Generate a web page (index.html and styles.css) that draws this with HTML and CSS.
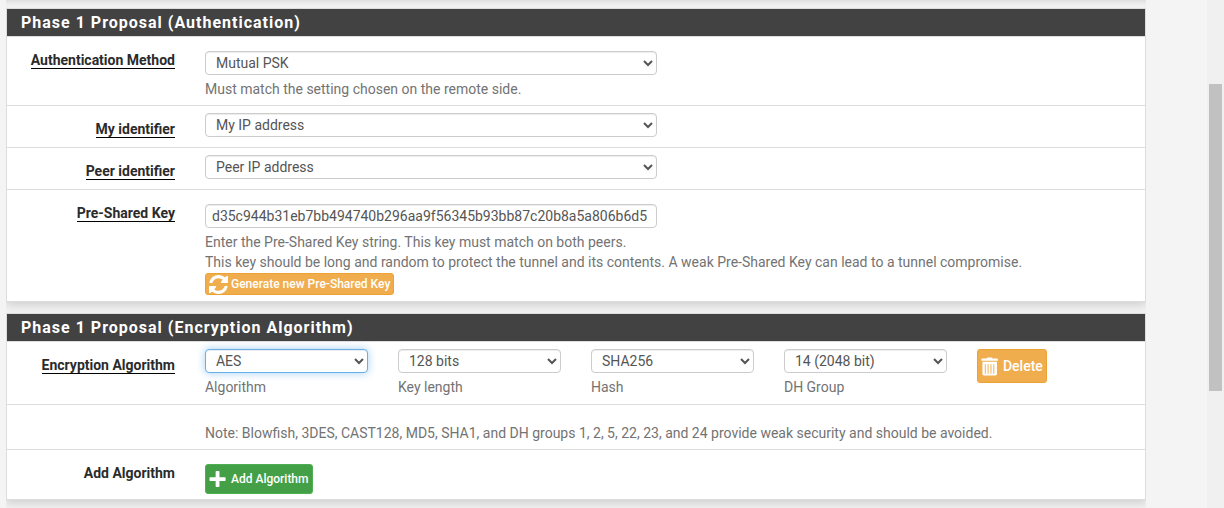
FILE: index.html
```html
<!DOCTYPE html>
<html lang="en">
<head>
<meta charset="utf-8">
<title>Phase 1 Proposal</title>
<link rel="stylesheet" href="styles.css">
</head>
<body>
<main class="content">
<form class="panels">
  <section class="panel">
    <h2 class="panel-heading">Phase 1 Proposal (Authentication)</h2>
    <div class="form-group">
      <label class="label" for="auth"><span class="required">Authentication Method</span></label>
      <div class="field">
        <select class="control" id="auth"><option>Mutual PSK</option></select>
        <p class="help">Must match the setting chosen on the remote side.</p>
      </div>
    </div>
    <div class="form-group compact">
      <label class="label" for="myid"><span class="required">My identifier</span></label>
      <div class="field"><select class="control" id="myid"><option>My IP address</option></select></div>
    </div>
    <div class="form-group compact">
      <label class="label" for="peerid"><span class="required">Peer identifier</span></label>
      <div class="field"><select class="control" id="peerid"><option>Peer IP address</option></select></div>
    </div>
    <div class="form-group">
      <label class="label" for="psk"><span class="required">Pre-Shared Key</span></label>
      <div class="field wide">
        <input class="control" id="psk" type="text" value="d35c944b31eb7bb494740b296aa9f56345b93bb87c20b8a5a806b6d5">
        <p class="help">Enter the Pre-Shared Key string. This key must match on both peers.<br>This key should be long and random to protect the tunnel and its contents. A weak Pre-Shared Key can lead to a tunnel compromise.</p>
        <button class="btn warning slim" type="button">
          <svg class="icon" viewBox="0 128 1536 1536" aria-hidden="true"><path d="M1511 1056q0 5-1 7-64 268-268 434.500t-478 166.500q-146 0-282.500-55t-243.500-157l-129 129q-19 19-45 19t-45-19-19-45v-448q0-26 19-45t45-19h448q26 0 45 19t19 45-19 45l-137 137q71 66 161 102t187 36q134 0 250-65t186-179q11-17 53-117 8-23 30-23h192q13 0 22.500 9.500t9.500 22.500zm25-800v448q0 26-19 45t-45 19h-448q-26 0-45-19t-19-45 19-45l138-138q-148-137-349-137-134 0-250 65t-186 179q-11 17-53 117-8 23-30 23h-199q-13 0-22.500-9.500t-9.500-22.500v-7q65-268 270-434.500t480-166.500q146 0 284 55.500t245 156.500l130-129q19-19 45-19t45 19 19 45z"/></svg>
          Generate new Pre-Shared Key
        </button>
      </div>
    </div>
  </section>

  <section class="panel">
    <h2 class="panel-heading">Phase 1 Proposal (Encryption Algorithm)</h2>
    <div class="form-group algorithms">
      <div class="label"><span class="required">Encryption Algorithm</span></div>
      <div class="field small">
        <select class="control focused" id="alg"><option>AES</option></select>
        <label class="help" for="alg">Algorithm</label>
      </div>
      <div class="field small">
        <select class="control" id="len"><option>128 bits</option></select>
        <label class="help" for="len">Key length</label>
      </div>
      <div class="field small">
        <select class="control" id="hash"><option>SHA256</option></select>
        <label class="help" for="hash">Hash</label>
      </div>
      <div class="field small">
        <select class="control" id="dh"><option>14 (2048 bit)</option></select>
        <label class="help" for="dh">DH Group</label>
      </div>
      <div class="field small">
        <button class="btn warning large" type="button">
          <svg class="icon" viewBox="0 0 20 20" aria-hidden="true"><path fill-rule="evenodd" d="M6 1.500Q6 .5 7 .5h4Q12 .5 12 1.500h5q.8 0 .8.800V4H.5V2.300q0-.8.800-.8zM1.500 5h15.300v13q0 1.500-1.500 1.500H3Q1.500 19.500 1.500 18zM4 7.500v10h1v-10zM7 7.500v10h1v-10zM10 7.500v10h1v-10zM13 7.500v10h1v-10z"/></svg>
          Delete
        </button>
      </div>
    </div>
    <div class="form-group note">
      <div class="label"></div>
      <div class="field wide"><p class="help">Note: Blowfish, 3DES, CAST128, MD5, SHA1, and DH groups 1, 2, 5, 22, 23, and 24 provide weak security and should be avoided.</p></div>
    </div>
    <div class="form-group add">
      <div class="label">Add Algorithm</div>
      <div class="field">
        <button class="btn success" type="button">
          <svg class="icon" viewBox="0 0 20 20" aria-hidden="true"><path d="M7 1.800q0-.8.800-.8h2.400q.8 0 .8.800v5.700h5.700q.8 0 .8.800v2.400q0 .8-.8.800H11v5.700q0 .8-.8.800H7.800q-.8 0-.8-.8v-5.700H1.300q-.8 0-.8-.8V8.300q0-.8.800-.8H7z"/></svg>
          Add Algorithm
        </button>
      </div>
    </div>
  </section>
</form>
</main>
<div class="scroll-track"><div class="scroll-thumb"></div></div>
</body>
</html>
```
FILE: styles.css
```css
* { box-sizing: border-box; }

body {
  display: flex;
  min-height: 100vh;
  margin: 0;
  background: #f4f4f4;
  color: #2b2b2b;
  font: 14px/20px Roboto, sans-serif;
}

.content {
  flex: 1;
  padding: 0 61px 0 6px;
}

.panels {
  display: flex;
  flex-direction: column;
  gap: 11px;
  min-height: 100%;
  padding-top: 8px;
  background: #f1f1f1;
  box-shadow: inset 0 6px 6px -6px rgba(0, 0, 0, .15);
}

.panel {
  border: 1px solid #ddd;
  background: #fff;
  box-shadow: 0 3px 8px rgba(0, 0, 0, .14);
  clip-path: inset(0 0 -10px);
}

.panel-heading {
  margin: 0;
  padding: 4px 14px;
  border-bottom: 1px solid #ddd;
  background: #424242;
  background-clip: padding-box;
  color: #fff;
  font-size: 16px;
  font-weight: 700;
  line-height: 19px;
  letter-spacing: 1px;
}

.form-group {
  --column: calc((100% + 20px) / 12);
  display: flex;
  padding: 13px 0 6px;
}

.form-group + .form-group { border-top: 1px solid #ddd; }

.form-group > * { flex: none; }

.label {
  width: calc(var(--column) * 2 - 25px);
  font-weight: 700;
  text-align: right;
}

.required {
  display: inline-block;
  border-bottom: 1px solid #000;
  line-height: 16px;
}

.field {
  width: calc(var(--column) * 5);
  padding: 1px 0 0 30px;
}

.field.wide { width: calc(var(--column) * 10); }
.field.wide .control { width: calc(50% - 15px); }
.field.small { width: calc(var(--column) * 2); }

.control {
  display: block;
  width: 100%;
  height: 24px;
  padding: 0 6px;
  border: 1px solid #ccc;
  border-radius: 4px;
  background: #fff;
  box-shadow: inset 0 1px 1px rgba(0, 0, 0, .075);
  color: #555;
  font: 14px/20px Roboto, sans-serif;
}

.focused {
  border-color: #66afe9;
  box-shadow: inset 0 1px 1px rgba(0, 0, 0, .075), 0 0 8px rgba(102, 175, 233, .6);
}

.help {
  display: block;
  margin: 0;
  padding-top: 4px;
  color: #737373;
}

.compact { padding: 6px 0 8px; }
.compact .label { padding-top: 7px; }
.algorithms { padding: 6px 0 7px; }
.algorithms .label { padding-top: 7px; }
.add { padding-bottom: 5px; }

.btn {
  display: inline-flex;
  align-items: center;
  gap: 3px;
  height: 30px;
  padding: 0 3px;
  border: 1px solid;
  border-radius: 3px;
  color: #fff;
  font: 500 12px/18px Roboto, sans-serif;
  vertical-align: top;
  white-space: nowrap;
}

.icon {
  width: 19px;
  height: 19px;
  fill: currentColor;
}

.warning { border-color: #eea236; background: #f0ad4e; }
.success { border-color: #4caf50; background: #43a047; }
.slim { height: 22px; margin-top: 1px; }
.large { height: 34px; font-size: 14px; }

.scroll-track {
  flex: none;
  width: 17px;
  padding: 84px 2px 0;
  background: #f0f0f0;
}

.scroll-thumb {
  height: 307px;
  background: #c1c1c1;
}
```
